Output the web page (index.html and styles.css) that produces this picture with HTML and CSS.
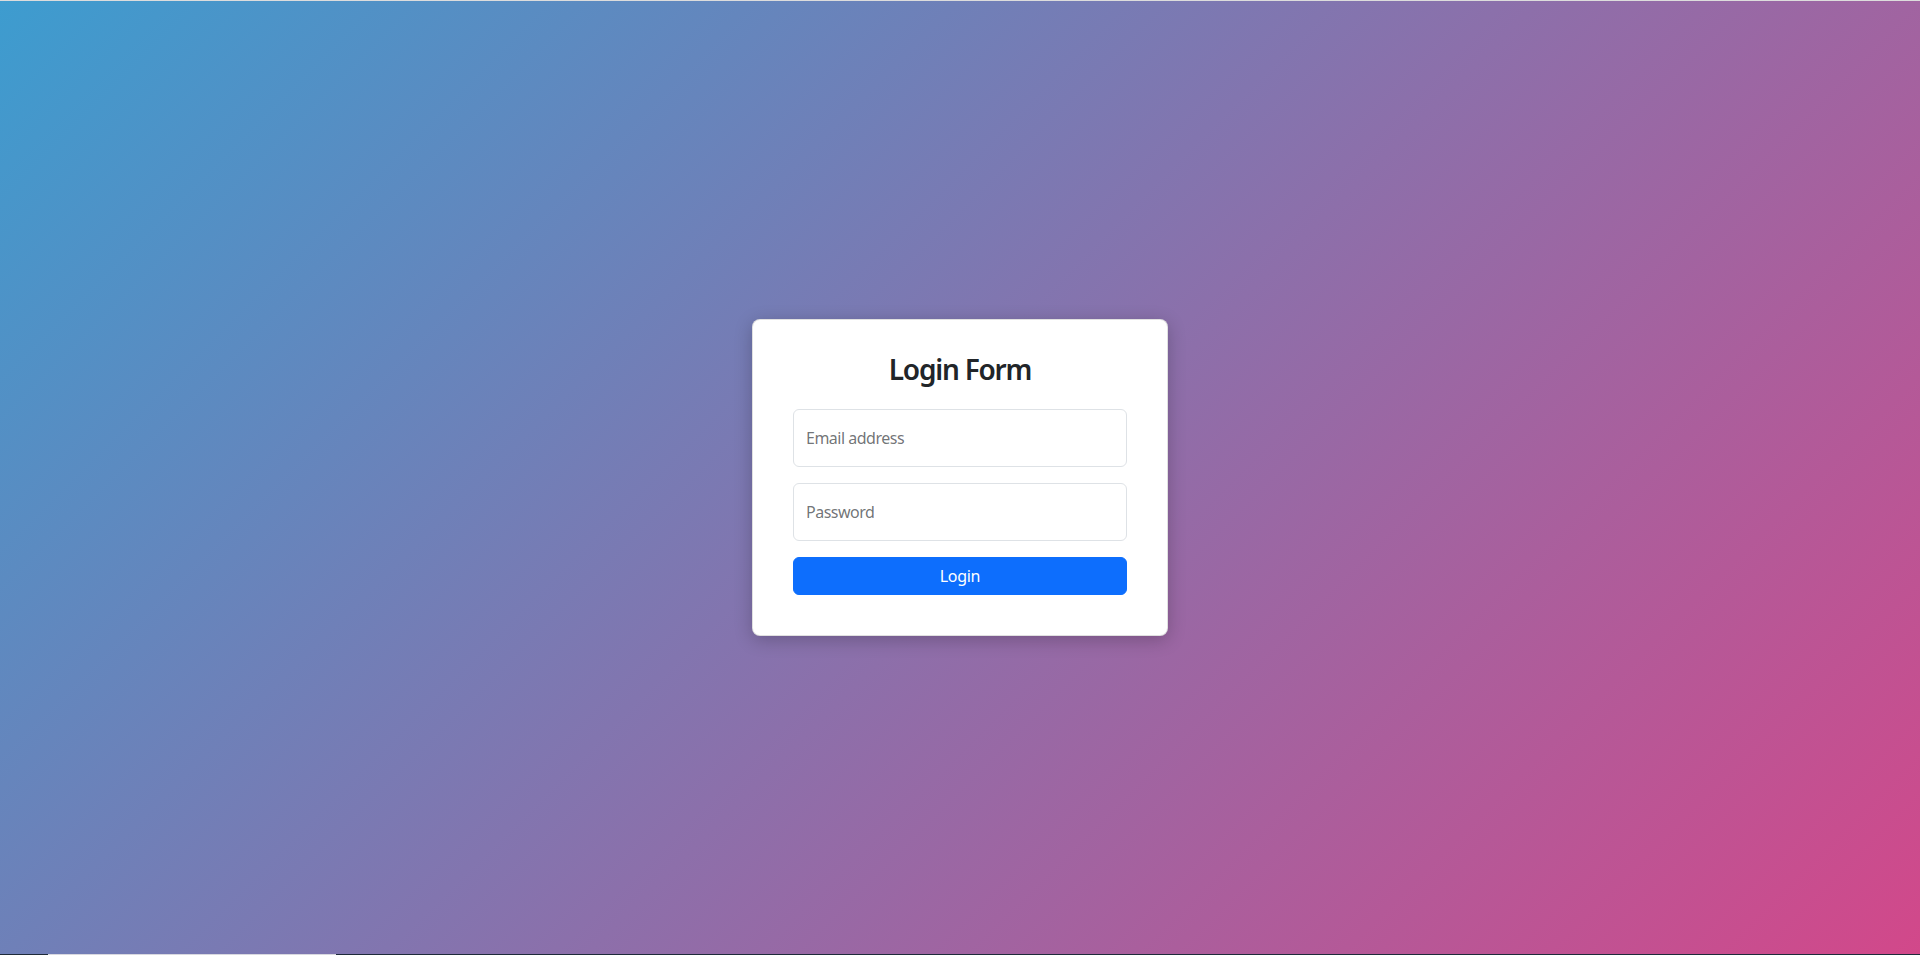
FILE: index.html
```html
<!DOCTYPE html>
<html lang="en">
<head>
<meta charset="utf-8">
<title>Login Form</title>
<link rel="stylesheet" href="styles.css">
</head>
<body>
<div class="topline"></div>
<main class="stage">
  <div class="card">
    <h3 class="title">Login Form</h3>
    <form class="form">
      <div class="field">
        <input class="input" type="email" id="email" placeholder=" ">
        <label class="label" for="email">Email address</label>
      </div>
      <div class="field">
        <input class="input" type="password" id="password" placeholder=" ">
        <label class="label" for="password">Password</label>
      </div>
      <button class="btn" type="button">Login</button>
    </form>
  </div>
</main>
<div class="bottomline"></div>
</body>
</html>
```

FILE: styles.css
```css
* { box-sizing: border-box; }
html, body { height: 100%; }
body {
  margin: 0;
  display: flex;
  flex-direction: column;
  font-family: "Noto Sans", "Open Sans", "Liberation Sans", sans-serif;
  font-size: 16px;
  line-height: 1.5;
  color: #212529;
  background: linear-gradient(135deg, #3d9ccf 0%, #d2488a 100%);
}
.topline { height: 1px; background: #dcdcdc; flex: none; }
.bottomline {
  height: 1px;
  flex: none;
  background: linear-gradient(to right, #1e2a3a 0, #1e2a3a 48px, #d8d8e0 48px, #d8d8e0 336px, #1e2a3a 336px);
}
.stage {
  flex: 1;
  display: flex;
  align-items: center;
  justify-content: center;
}
.card {
  width: 416px;
  background: #fff;
  border: 1px solid rgba(0,0,0,0.12);
  border-radius: 8px;
  padding: 33px 40px 40px;
  box-shadow: 0 4px 18px rgba(0,0,0,0.22);
}
.title {
  margin: 0 0 23px;
  text-align: center;
  font-size: 28px;
  font-weight: 600;
  line-height: 1.2;
  letter-spacing: -1.2px;
}
.form { display: flex; flex-direction: column; }
.field { position: relative; margin-bottom: 16px; }
.input {
  display: block;
  width: 100%;
  height: 58px;
  border: 1px solid #dee2e6;
  border-radius: 6px;
  background: #fff;
  padding: 16px 12px;
  font: inherit;
  color: #212529;
  outline: none;
}
.label {
  position: absolute;
  top: 0;
  left: 0;
  height: 100%;
  padding: 16px 12px;
  border: 1px solid transparent;
  color: rgba(33,37,41,0.65);
  pointer-events: none;
  white-space: nowrap;
  letter-spacing: -0.5px;
}
.btn {
  height: 38px;
  border: 1px solid #0d6efd;
  border-radius: 6px;
  background: #0d6efd;
  color: #fff;
  font: inherit;
  letter-spacing: -0.3px;
  cursor: pointer;
}
```
